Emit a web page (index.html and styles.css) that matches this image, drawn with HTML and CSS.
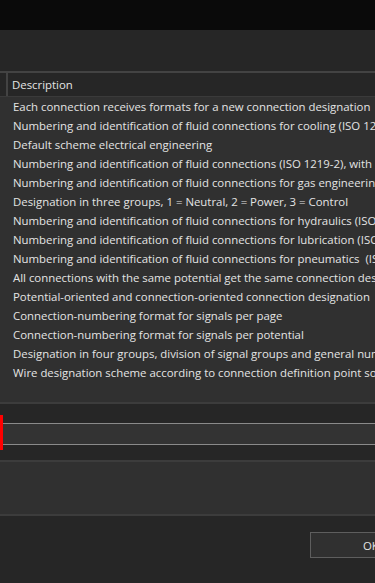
FILE: index.html
```html
<!DOCTYPE html>
<html>
<head>
<meta charset="utf-8">
<link rel="stylesheet" href="styles.css">
</head>
<body>
<div class="app">
  <div class="titlebar"></div>
  <div class="toolbar"></div>
  <div class="table">
    <div class="thead">
      <div class="th th-first"></div>
      <div class="th th-desc">Description</div>
    </div>
    <div class="tbody">
      <div class="row">Each connection receives formats for a new connection designation</div>
      <div class="row">Numbering and identification of fluid connections for cooling (ISO 1219-2)</div>
      <div class="row">Default scheme electrical engineering</div>
      <div class="row">Numbering and identification of fluid connections (ISO 1219-2), with</div>
      <div class="row">Numbering and identification of fluid connections for gas engineering</div>
      <div class="row">Designation in three groups, 1 = Neutral, 2 = Power, 3 = Control</div>
      <div class="row">Numbering and identification of fluid connections for hydraulics (ISO 1219-2)</div>
      <div class="row">Numbering and identification of fluid connections for lubrication (ISO 1219-2)</div>
      <div class="row">Numbering and identification of fluid connections for pneumatics &nbsp;(ISO 1219-2)</div>
      <div class="row">All connections with the same potential get the same connection designation</div>
      <div class="row">Potential-oriented and connection-oriented connection designation</div>
      <div class="row">Connection-numbering format for signals per page</div>
      <div class="row">Connection-numbering format for signals per potential</div>
      <div class="row">Designation in four groups, division of signal groups and general numbering</div>
      <div class="row">Wire designation scheme according to connection definition point source</div>
    </div>
  </div>
  <div class="gap1"></div>
  <div class="field"><span class="marker"></span></div>
  <div class="gap2"></div>
  <div class="panel"></div>
  <div class="footer">
    <button class="btn">OK</button>
  </div>
</div>
</body>
</html>
```
FILE: styles.css
```css
* { box-sizing: border-box; }
html, body { margin: 0; padding: 0; background: #262626; }
body { width: 375px; height: 583px; overflow: hidden; font-family: "Open Sans", "Noto Sans", sans-serif; font-size: 11.4px; color: #e4e4e4; }
.app { display: flex; flex-direction: column; width: 375px; height: 583px; overflow: hidden; }
.titlebar { height: 30px; background: #0a0a0a; flex: none; }
.toolbar { height: 41px; background: #262626; flex: none; }
.table { border-top: 2px solid #434343; border-bottom: 2px solid #3c3c3c; flex: none; }
.thead { display: flex; height: 24px; background: #262626; border-bottom: 1px solid #3a3a3a; }
.th { white-space: nowrap; line-height: 23px; }
.th-first { width: 8px; border-right: 2px solid #434343; flex: none; }
.th-desc { padding-left: 4px; }
.tbody { height: 305px; background: #303030; padding-top: 0; overflow: hidden; }
.row { height: 19px; line-height: 19px; padding-left: 13px; white-space: nowrap; }
.gap1 { height: 19px; background: #262626; flex: none; }
.field { position: relative; height: 22px; background: #333333; border-top: 1px solid #8a8a8a; border-bottom: 1px solid #8a8a8a; flex: none; }
.marker { position: absolute; left: 0; top: -9px; width: 3px; height: 35px; background: #ff0000; }
.gap2 { height: 15px; background: #262626; flex: none; }
.panel { height: 56px; background: #303030; border-top: 2px solid #3c3c3c; border-bottom: 2px solid #3c3c3c; flex: none; }
.footer { flex: 1; background: #262626; position: relative; }
.btn { position: absolute; left: 310px; top: 16px; width: 120px; height: 26px; background: #303030; border: 1px solid #5e5e5e; color: #e4e4e4; font-family: inherit; font-size: 11.4px; padding: 0 0 0 52px; text-align: left; }
```
